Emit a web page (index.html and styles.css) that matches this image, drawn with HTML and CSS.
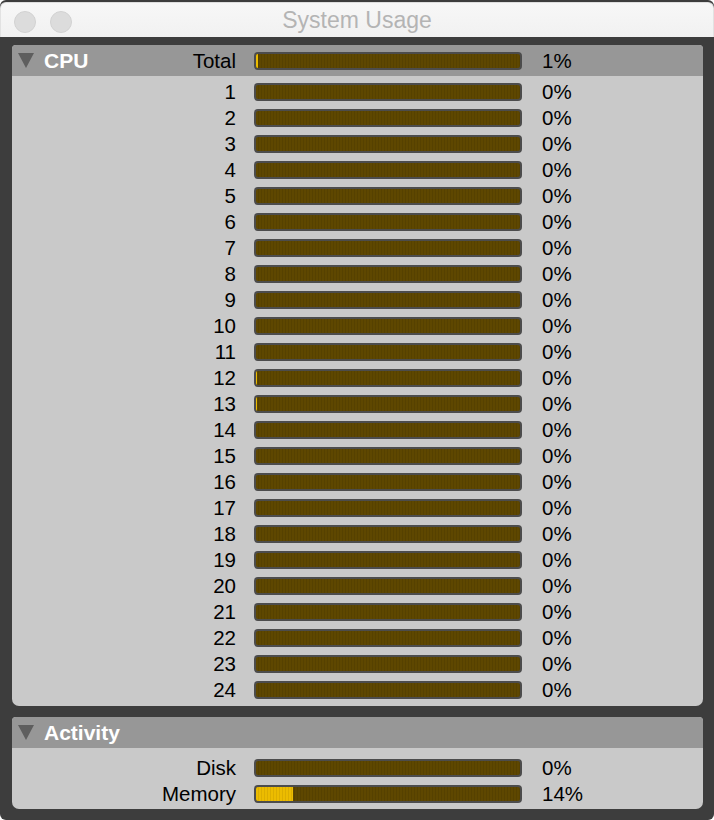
FILE: index.html
```html
<!DOCTYPE html>
<html>
<head>
<meta charset="utf-8">
<title>System Usage</title>
<link rel="stylesheet" href="styles.css">
</head>
<body>
<div class="window">
  <div class="titlebar">
    <div class="lights"><span class="light"></span><span class="light"></span></div>
    <div class="title">System Usage</div>
  </div>
  <div class="frame">
    <section class="panel cpu">
      <div class="header row">
        <div class="label head-label">
          <svg class="tri" width="16" height="15" viewBox="0 0 16 15"><polygon points="0,0 16,0 8,15" fill="#5e5e5e"/></svg>
          <span class="name">CPU</span>
          <span class="sub">Total</span>
        </div>
        <div class="bar"><div class="fill" style="width:2px"></div></div>
        <div class="pct">1%</div>
      </div>
      <div class="rows">
        <div class="row"><div class="label">1</div><div class="bar"></div><div class="pct">0%</div></div>
        <div class="row"><div class="label">2</div><div class="bar"></div><div class="pct">0%</div></div>
        <div class="row"><div class="label">3</div><div class="bar"></div><div class="pct">0%</div></div>
        <div class="row"><div class="label">4</div><div class="bar"></div><div class="pct">0%</div></div>
        <div class="row"><div class="label">5</div><div class="bar"></div><div class="pct">0%</div></div>
        <div class="row"><div class="label">6</div><div class="bar"></div><div class="pct">0%</div></div>
        <div class="row"><div class="label">7</div><div class="bar"></div><div class="pct">0%</div></div>
        <div class="row"><div class="label">8</div><div class="bar"></div><div class="pct">0%</div></div>
        <div class="row"><div class="label">9</div><div class="bar"></div><div class="pct">0%</div></div>
        <div class="row"><div class="label">10</div><div class="bar"></div><div class="pct">0%</div></div>
        <div class="row"><div class="label">11</div><div class="bar"></div><div class="pct">0%</div></div>
        <div class="row"><div class="label">12</div><div class="bar"><div class="fill" style="width:1px"></div></div><div class="pct">0%</div></div>
        <div class="row"><div class="label">13</div><div class="bar"><div class="fill" style="width:1px"></div></div><div class="pct">0%</div></div>
        <div class="row"><div class="label">14</div><div class="bar"></div><div class="pct">0%</div></div>
        <div class="row"><div class="label">15</div><div class="bar"></div><div class="pct">0%</div></div>
        <div class="row"><div class="label">16</div><div class="bar"></div><div class="pct">0%</div></div>
        <div class="row"><div class="label">17</div><div class="bar"></div><div class="pct">0%</div></div>
        <div class="row"><div class="label">18</div><div class="bar"></div><div class="pct">0%</div></div>
        <div class="row"><div class="label">19</div><div class="bar"></div><div class="pct">0%</div></div>
        <div class="row"><div class="label">20</div><div class="bar"></div><div class="pct">0%</div></div>
        <div class="row"><div class="label">21</div><div class="bar"></div><div class="pct">0%</div></div>
        <div class="row"><div class="label">22</div><div class="bar"></div><div class="pct">0%</div></div>
        <div class="row"><div class="label">23</div><div class="bar"></div><div class="pct">0%</div></div>
        <div class="row"><div class="label">24</div><div class="bar"></div><div class="pct">0%</div></div>
      </div>
    </section>
    <section class="panel activity">
      <div class="header">
        <div class="label head-label">
          <svg class="tri" width="16" height="15" viewBox="0 0 16 15"><polygon points="0,0 16,0 8,15" fill="#5e5e5e"/></svg>
          <span class="name">Activity</span>
        </div>
      </div>
      <div class="rows">
        <div class="row"><div class="label">Disk</div><div class="bar"></div><div class="pct">0%</div></div>
        <div class="row"><div class="label">Memory</div><div class="bar"><div class="fill" style="width:14%"></div></div><div class="pct">14%</div></div>
      </div>
    </section>
  </div>
</div>
</body>
</html>
```

FILE: styles.css
```css
* { box-sizing: border-box; }

html, body {
  margin: 0;
  padding: 0;
  background: #ffffff;
}

body {
  font-family: "Liberation Sans", Arial, Helvetica, sans-serif;
  font-size: 20.5px;
  color: #000;
}

.window {
  width: 714px;
  height: 820px;
  display: flex;
  flex-direction: column;
  border-radius: 6px;
  overflow: hidden;
  background: #3d3d3d;
}

.titlebar {
  height: 35px;
  flex: none;
  position: relative;
  display: flex;
  align-items: center;
  justify-content: center;
  background: linear-gradient(#f7f7f7, #f1f1f1);
  border-top: 1px solid #dedede;
  border-left: 1px solid #e2e2e2;
  border-right: 1px solid #e2e2e2;
  border-radius: 6px 6px 0 0;
  margin-top: 2px;
}

.lights {
  position: absolute;
  left: 13px;
  top: 8px;
  display: flex;
  gap: 14px;
}

.light {
  width: 22px;
  height: 22px;
  border-radius: 50%;
  background: #dcdcdc;
  border: 1px solid #d2d2d2;
}

.title {
  font-size: 23px;
  color: #b4b4b4;
  padding-top: 1px;
}

.frame {
  flex: 1;
  display: flex;
  flex-direction: column;
  gap: 11px;
  padding: 8px 11px 11px 12px;
}

.panel {
  background: #c9c9c9;
  border-radius: 4px 4px 7px 7px;
  overflow: hidden;
}

.header {
  height: 31px;
  background: #979797;
}

.row {
  display: grid;
  grid-template-columns: 224px 268px 1fr;
  column-gap: 18px;
  align-items: center;
  height: 26px;
  line-height: 26px;
}

.header.row {
  height: 31px;
}

.cpu .rows { padding: 3px 0 3px; }
.activity .rows { padding: 7px 0 2px; }

.label {
  text-align: right;
}

.head-label {
  display: flex;
  align-items: center;
  height: 31px;
  padding: 0 0 0 6px;
}

.tri {
  flex: none;
}

.name {
  color: #ffffff;
  font-weight: bold;
  font-size: 21px;
  margin-left: 10px;
}

.sub {
  margin-left: auto;
}

.bar {
  height: 18px;
  border: 2px solid #4c4c4c;
  border-radius: 4px;
  background: repeating-linear-gradient(90deg, #5e4700 0 2px, #564100 2px 3px);
  overflow: hidden;
  display: flex;
}

.fill {
  height: 100%;
  background: repeating-linear-gradient(90deg, #ecbc00 0 2px, #dcae00 2px 3px);
}

.pct {
  padding-left: 2px;
}
```
